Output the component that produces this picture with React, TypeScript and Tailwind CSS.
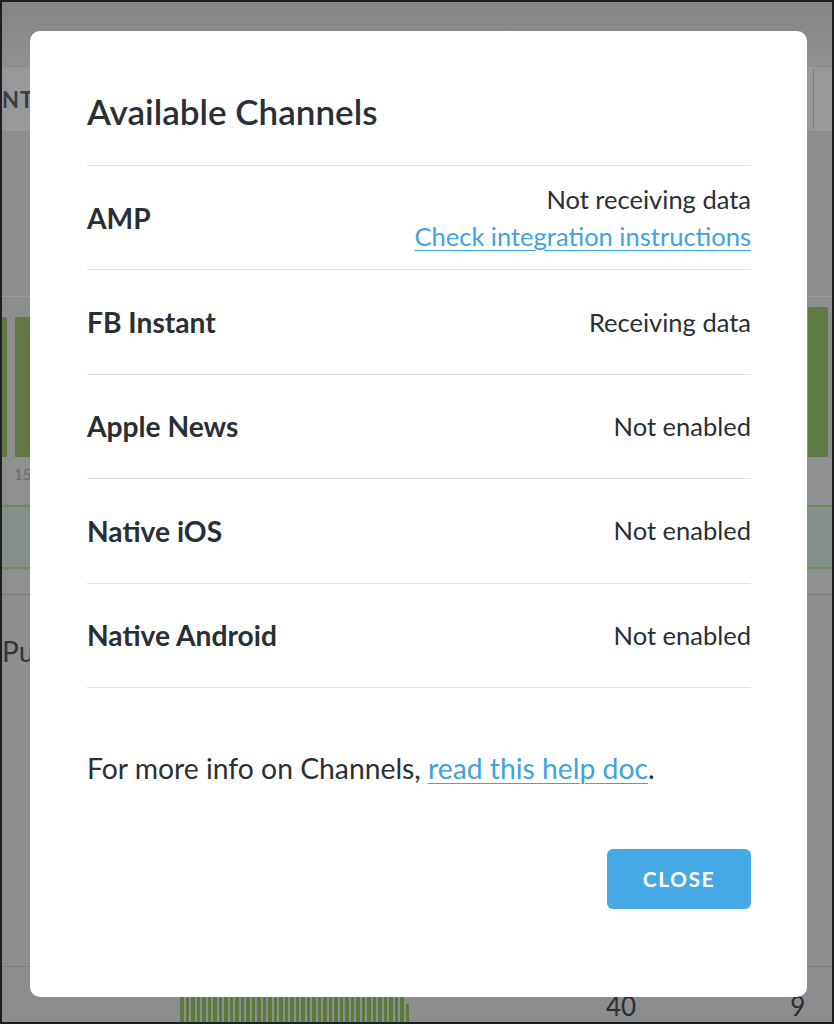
import React from 'react'

interface Channel {
  name: string
  status: string
  link?: string
}

const channels: Channel[] = [
  { name: 'AMP', status: 'Not receiving data', link: 'Check integration instructions' },
  { name: 'FB Instant', status: 'Receiving data' },
  { name: 'Apple News', status: 'Not enabled' },
  { name: 'Native iOS', status: 'Not enabled' },
  { name: 'Native Android', status: 'Not enabled' },
]

const font = { fontFamily: 'Lato, "Noto Sans", sans-serif' }

function Backdrop() {
  // dimmed dashboard behind the dialog
  return (
    <div className="flex flex-col w-full h-full">
      <div className="h-[64px] bg-gradient-to-b from-[#848587] to-[#8f9092]" />
      <div className="h-[66px] bg-[#97989a] border-y border-[#8a8b8d] flex items-center justify-between">
        <span className="text-[22px] font-bold tracking-wider text-[#3b3d41]">NT</span>
        <div className="w-px h-[60px] bg-[#7d7e80] mr-[18px]" />
      </div>
      <div className="h-[165px] bg-[#8d8e90] border-b border-dotted border-[#a4a6a8]" />
      <div className="h-[160px] bg-[#8c8d8f] flex items-end justify-between pt-[10px]">
        <div className="flex gap-[8px] h-[140px] -ml-[4px]">
          <div className="w-[9px] bg-[#5f7a45] rounded-t-[2px]" />
          <div className="w-[17px] bg-[#5f7a45] rounded-t-[2px]" />
        </div>
        <div className="w-[20px] h-[150px] bg-[#5f7a45] rounded-t-[2px] mr-[4px]" />
      </div>
      <div className="h-[46px] bg-[#8e8f91] pl-[12px] pt-[6px] text-[15px] text-[#6a6c70]">15</div>
      <div className="h-[64px] bg-[#86908a] border-y-2 border-[#6f8a52] my-[2px]" />
      <div className="h-[24px] bg-[#8e8f91] border-b border-[#77787a]" />
      <div className="h-[372px] bg-[#8d8e90] border-b border-[#7d7e80] pt-[35px] text-[28px] text-[#333539]">Pu</div>
      <div className="flex-1 bg-[#8c8d8f] flex items-end">
        <div className="ml-[178px] w-[232px] h-[26px] flex gap-[2px] items-end">
          {Array.from({ length: 42 }).map((_, i) => (
            <div key={i} className={i === 41 ? 'w-[3px] h-[18px] bg-[#5b7a3c]' : 'w-[3.5px] h-[26px] bg-[#5b7a3c]'} />
          ))}
        </div>
        <span className="ml-[194px] mb-[-4px] text-[26px] text-[#2c2e32]">40</span>
        <span className="ml-[154px] mb-[-4px] text-[26px] text-[#2c2e32]">9</span>
      </div>
    </div>
  )
}

export default function App() {
  return (
    <div className="w-[834px] h-[1024px] relative overflow-hidden border-2 border-[#1e1e1e] bg-[#8c8d8f]" style={font}>
      <Backdrop />

      <div className="absolute left-[28px] top-[29px] w-[777px] h-[966px] bg-white rounded-[10px] pl-[57px] pr-[56px] pt-[60px] text-[#2a2f36]">
        <h2 className="text-[35px] leading-[40px] font-semibold mb-[34px]">Available Channels</h2>

        <div className="border-t border-[#dde1e6]">
          {channels.map((c) => (
            <div key={c.name} className="h-[104.4px] border-b border-[#dde1e6] flex items-center justify-between">
              <span className="text-[28.2px] font-bold">{c.name}</span>
              <div className="flex flex-col items-end text-[25.5px] leading-[37px]">
                <span>{c.status}</span>
                {c.link && <a className="text-[#3ea3e0] underline underline-offset-[4px] decoration-1">{c.link}</a>}
              </div>
            </div>
          ))}
        </div>

        <p className="mt-[62px] text-[28.3px] leading-[36px]">
          For more info on Channels, <a className="text-[#3ea3e0] underline underline-offset-[4px] decoration-1">read this help doc</a>.
        </p>

        <div className="flex justify-end mt-[63px]">
          <button className="w-[144px] h-[60px] rounded-[6px] bg-[#45a9e5] text-white text-[21px] font-bold tracking-[1.5px]">
            CLOSE
          </button>
        </div>
      </div>
    </div>
  )
}
